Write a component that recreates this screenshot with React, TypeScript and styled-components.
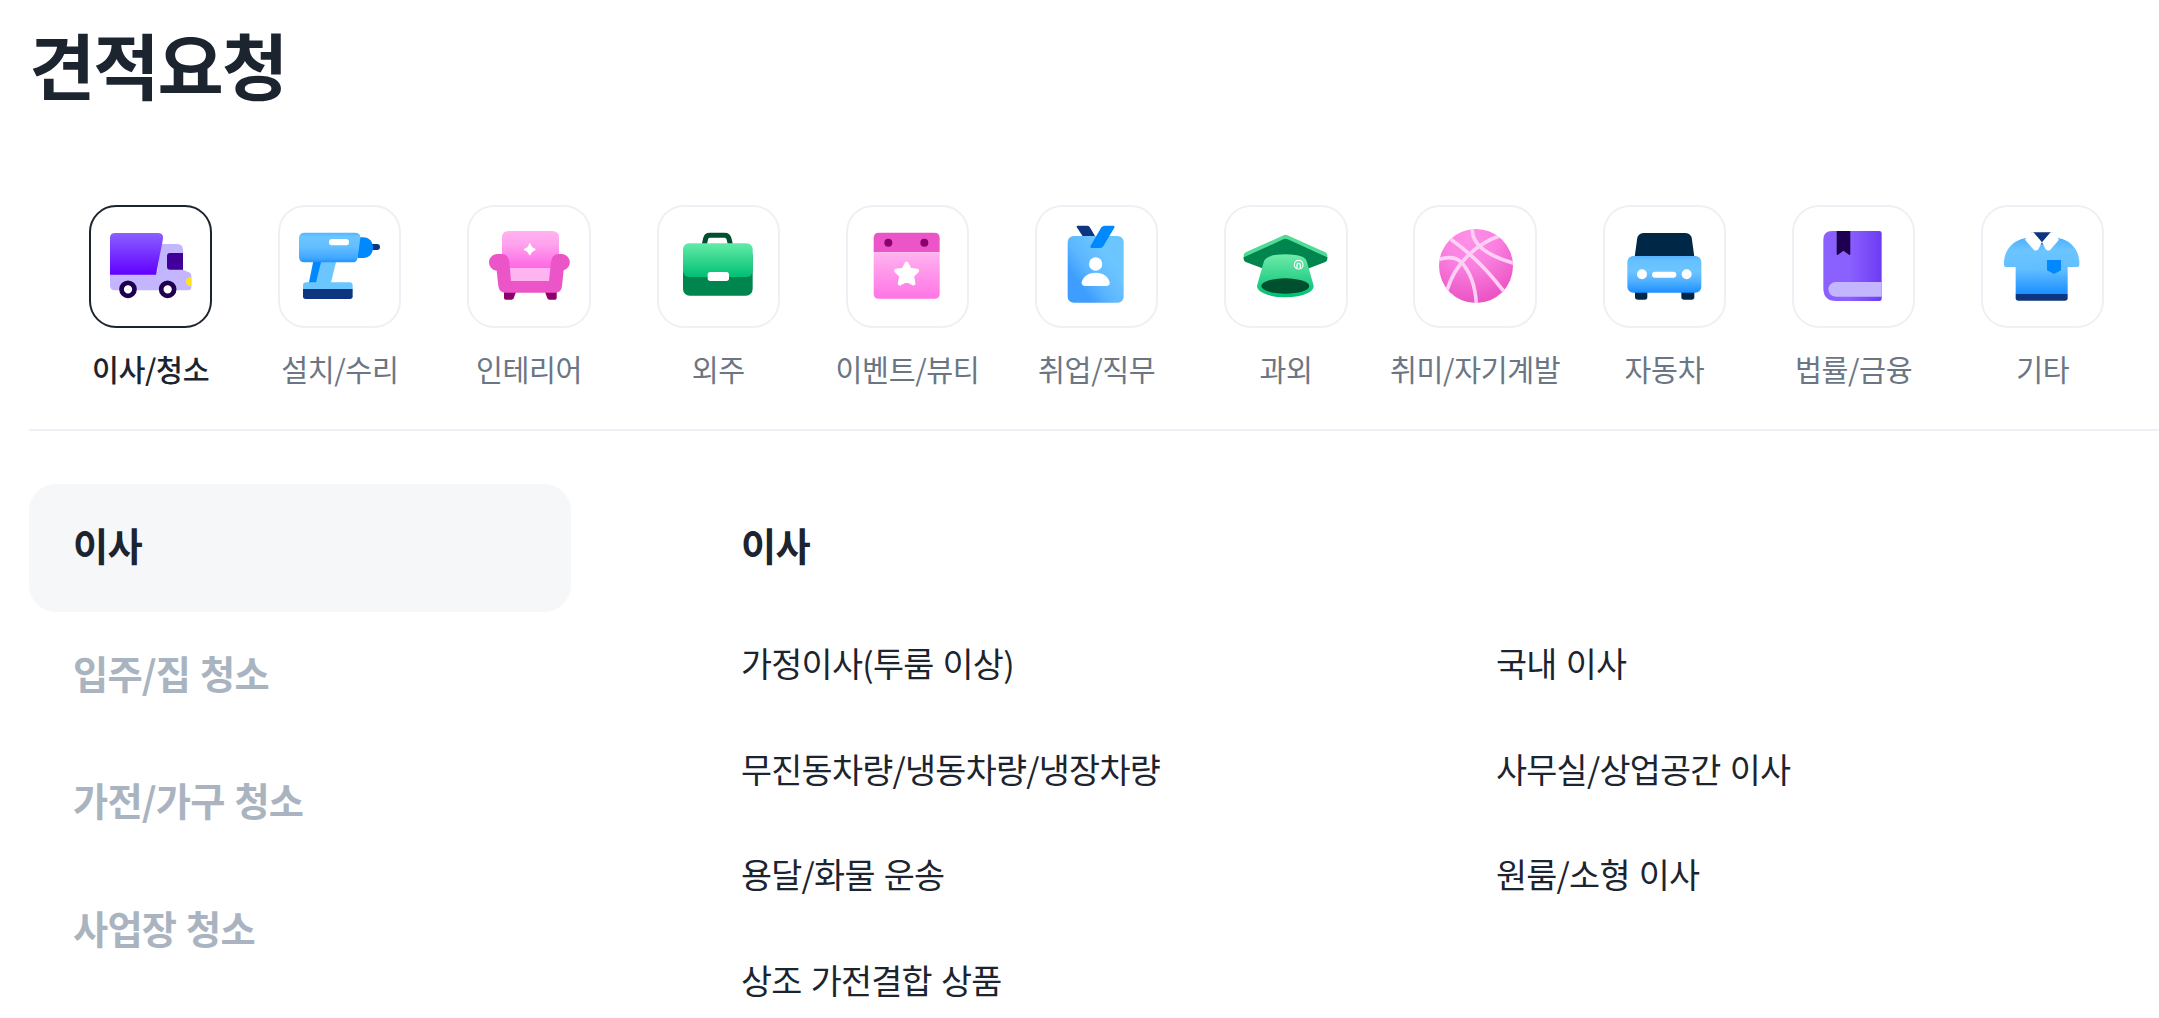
import { FC, ReactNode, useState } from "react";
import styled, { createGlobalStyle } from "styled-components";

const TruckIcon = () => (
  <>
    <defs>
      <linearGradient id="truck" x1="0" y1="0" x2="0" y2="1">
        <stop stopColor="#8A60FF" />
        <stop offset="1" stopColor="#6100FF" />
      </linearGradient>
    </defs>
    <path
      fill="#C4B5FF"
      d="M63 200H205L215 117H264Q282 117 282 135V194L300 202Q307 205 307 212V246Q307 256 297 256H78Q63 256 63 241Z"
    />
    <path
      fill="url(#truck)"
      d="M63 99Q63 84 78 84H207Q224 84 222 101L201 209H63Z"
    />
    <path fill="#400099" d="M282 144V194H243Q234 194 234 185V153Q234 144 243 144Z" />
    <path fill="#FFE21A" d="M307 217V243C297 244 291 238 291 230S297 216 307 217Z" />
    <circle cx="117" cy="253" r="19.5" fill="#fff" stroke="#1F0050" strokeWidth="14" />
    <circle cx="236" cy="253" r="19.5" fill="#fff" stroke="#1F0050" strokeWidth="14" />
  </>
);

const DrillIcon = () => (
  <>
    <defs>
      <linearGradient id="drill" x1="0" y1="0" x2="0" y2="1">
        <stop stopColor="#55B2FF" />
        <stop offset=".14" stopColor="#6BC5FF" />
        <stop offset=".5" stopColor="#62BDFF" />
        <stop offset=".85" stopColor="#42A8FF" />
        <stop offset="1" stopColor="#1F93FF" />
      </linearGradient>
    </defs>
    <path fill="#0E357F" d="M278 117H297Q306 117 306 126T297 135H278Z" />
    <path fill="#0088FF" d="M244 97H255C274 97 285 111 285 128S274 159 255 159H238Z" />
    <path fill="#0088FF" d="M106 168H132L115 236H92Z" />
    <path fill="#6BC5FF" d="M130 168H175L158 236H113Z" />
    <path
      fill="url(#drill)"
      d="M63 100Q63 83 80 83H231Q248 83 247 99L239 158Q237 172 223 172H80Q63 172 63 155Z"
    />
    <rect x="153" y="102" width="60" height="19" rx="9.5" fill="#fff" />
    <path fill="#6BC5FF" d="M75 252V242Q75 232 85 232H214Q224 232 224 242V252Z" />
    <path fill="#0E357F" d="M75 252H224V274Q224 282 216 282H83Q75 282 75 274Z" />
  </>
);

const SofaIcon = () => (
  <>
    <defs>
      <linearGradient id="sofa" x1="0" y1="0" x2="0" y2="1">
        <stop stopColor="#FFB3F0" />
        <stop offset=".35" stopColor="#FFA3EE" />
        <stop offset="1" stopColor="#FF66E5" />
      </linearGradient>
    </defs>
    <path fill="#8C006B" d="M108 258H145L137 280Q135 284 131 284H113Q108 284 108 279Z" />
    <path fill="#8C006B" d="M266 258H230L238 280Q240 284 244 284H261Q266 284 266 279Z" />
    <path fill="url(#sofa)" d="M102 98Q102 78 122 78H253Q273 78 273 98V190H102Z" />
    <path fill="#FFB3F0" d="M115 189H260V235H115Z" />
    <path
      fill="#EB55C8"
      d="M90 147H101Q121 147 124 170L129 228H243L249 170Q252 147 272 147H283A25 25 0 0 1 287 196L282 243Q280 263 262 263H112Q94 263 91 243L86 197A25 25 0 0 1 90 147Z"
    />
    <path
      fill="#fff"
      d="M185 115Q188 115 190 122Q192 127 197 129Q203 131 203 133Q203 136 197 138Q192 140 190 145Q188 151 185 151Q183 151 181 145Q179 140 174 138Q167 136 167 133Q167 131 174 129Q179 127 181 122Q183 115 185 115Z"
    />
  </>
);

const BriefcaseIcon = () => (
  <>
    <defs>
      <linearGradient id="briefcase" x1="0" y1="0" x2="0" y2="1">
        <stop stopColor="#63EBA8" />
        <stop offset="1" stopColor="#00BF73" />
      </linearGradient>
    </defs>
    <path
      d="M142 118L146 101Q148 91 159 91H203Q213 91 216 101L220 118"
      fill="none"
      stroke="#00502F"
      strokeWidth="15"
    />
    <rect x="78" y="130" width="209" height="142" rx="20" fill="#00854F" />
    <rect x="78" y="115" width="209" height="101" rx="18" fill="url(#briefcase)" />
    <rect x="152" y="201" width="64" height="27" rx="8" fill="#fff" />
  </>
);

const CalendarIcon = () => (
  <>
    <defs>
      <linearGradient id="calendar" x1="0" y1="0" x2="0" y2="1">
        <stop stopColor="#FFB3F0" />
        <stop offset="1" stopColor="#FF74E5" />
      </linearGradient>
    </defs>
    <path fill="#EB55C8" d="M83 142V99Q83 83 99 83H265Q281 83 281 99V142Z" />
    <path fill="url(#calendar)" d="M83 142H281V266Q281 281 265 281H99Q83 281 83 266Z" />
    <circle cx="127" cy="113" r="12" fill="#8C006B" />
    <circle cx="235" cy="113" r="12" fill="#8C006B" />
    <path
      d="M182 176L191.5 194.5L213.5 197.5L198 212.5L202.5 235.5L182 225L161.5 235.5L166 212.5L150.5 197.5L172.500 194.5Z"
      fill="#fff"
      stroke="#fff"
      strokeWidth="12"
      strokeLinejoin="round"
    />
  </>
);

const BadgeIcon = () => (
  <>
    <defs>
      <linearGradient id="badge" x1=".12" y1=".8" x2=".7" y2=".3">
        <stop offset=".15" stopColor="#3D9EFF" />
        <stop offset=".5" stopColor="#5CB6FF" />
        <stop offset="1" stopColor="#6BC5FF" />
      </linearGradient>
    </defs>
    <path fill="#0E357F" d="M128 62H155Q161 62 164 66L184 100H147L125 66Q124 62 128 62Z" />
    <rect x="98" y="93" width="168" height="200" rx="18" fill="url(#badge)" />
    <path
      fill="#0088FF"
      d="M210 62H235Q241 63 238 68L205 123Q202 129 195 129H170Q164 128 167 122L199 67Q203 62 210 62Z"
    />
    <circle cx="182" cy="177" r="20" fill="#fff" />
    <path
      fill="#fff"
      d="M182 203C205 203 220 215 224 232Q225 243 214 243H151Q139 243 140 232C144 215 159 203 182 203Z"
    />
  </>
);

const CapIcon = () => (
  <>
    <defs>
      <linearGradient id="cap" x1="0" y1="0" x2="0" y2="1">
        <stop stopColor="#6EEBAA" />
        <stop offset="1" stopColor="#00BF73" />
      </linearGradient>
    </defs>
    <path
      fill="#50DC96"
      d="M179 91Q184 88 190 91L304 142Q310 145 310 151V160H59V151Q59 145 65 142Z"
    />
    <path
      fill="#00854F"
      d="M178 103Q184 100 191 103L310 157V162Q310 168 304 171L255 190H115L65 171Q59 168 59 162V157Z"
    />
    <path
      fill="url(#cap)"
      d="M120 168Q128 148 184 148T248 168L269 242Q270 256 250 265Q225 277 184 277T119 265Q98 256 99 242Z"
    />
    <ellipse cx="184" cy="243" rx="72" ry="23" fill="#00502F" />
    <circle cx="224" cy="179" r="13" fill="none" stroke="#fff" strokeWidth="3.5" />
    <path d="M219 190V180A5 5 0 0 1 229 180V190" fill="none" stroke="#fff" strokeWidth="4" />
  </>
);

const BallIcon = () => (
  <>
    <defs>
      <radialGradient id="ball" cx=".4" cy=".12" r=".95">
        <stop stopColor="#FF90E8" />
        <stop offset=".4" stopColor="#FA80E0" />
        <stop offset="1" stopColor="#E84DC0" />
      </radialGradient>
      <clipPath id="ballClip">
        <circle cx="186" cy="183" r="111" />
      </clipPath>
    </defs>
    <circle cx="186" cy="183" r="111" fill="url(#ball)" />
    <g clipPath="url(#ballClip)" fill="none" stroke="#FFD0F6" strokeWidth="11">
      <path d="M174 68C174 112 202 146 300 175" />
      <path d="M258 92C190 115 124 172 99 256" />
      <path d="M110 103C160 137 222 197 270 260" />
      <path d="M72 164C108 152 130 160 142 172C170 202 184 245 187 296" />
    </g>
  </>
);

const CarIcon = () => (
  <>
    <defs>
      <linearGradient id="car" x1="0" y1="0" x2="0" y2="1">
        <stop stopColor="#55B2FF" />
        <stop offset=".12" stopColor="#66C0FF" />
        <stop offset=".4" stopColor="#6BC5FF" />
        <stop offset=".7" stopColor="#4FB0FF" />
        <stop offset="1" stopColor="#1A8FFF" />
      </linearGradient>
    </defs>
    <path fill="#002846" d="M95 156L102 104Q104 84 122 84H247Q265 84 267 104L274 156Z" />
    <path fill="#002846" d="M96 255H133V276Q133 284 125 284H105Q96 284 96 276Z" />
    <path fill="#002846" d="M235 255H274V276Q274 284 266 284H244Q235 284 235 276Z" />
    <rect x="73" y="153" width="222" height="110" rx="18" fill="url(#car)" />
    <circle cx="117" cy="208" r="15" fill="#fff" />
    <circle cx="251" cy="208" r="15" fill="#fff" />
    <rect x="147" y="200" width="73" height="18" rx="9" fill="#fff" />
  </>
);

const BookIcon = () => (
  <>
    <defs>
      <linearGradient id="book" x1="0" y1="0" x2="1" y2="0">
        <stop offset=".45" stopColor="#8A60FF" />
        <stop offset="1" stopColor="#6C3CF2" />
      </linearGradient>
    </defs>
    <path
      fill="url(#book)"
      d="M94 104Q94 78 120 78H262Q269 78 269 85V281Q269 288 262 288H132Q94 288 94 250Z"
    />
    <path fill="#1F0050" d="M134 78H175V147Q175 151 171 149L154.5 137L138 149Q134 151 134 147Z" />
    <path fill="#C4B5FF" d="M269 231V275H131A22 22 0 0 1 131 231Z" />
  </>
);

const ShirtIcon = () => (
  <>
    <defs>
      <linearGradient id="shirt" x1="0" y1="0" x2="0" y2="1">
        <stop stopColor="#4FB0FF" />
        <stop offset=".22" stopColor="#6BC5FF" />
        <stop offset=".55" stopColor="#62BEFF" />
        <stop offset="1" stopColor="#1A8FFF" />
      </linearGradient>
    </defs>
    <path
      fill="url(#shirt)"
      d="M132 100H234C268 106 292 132 295 168V180Q295 186 289 186H260V268H104V186H75Q69 186 69 180V168C72 132 98 106 132 100Z"
    />
    <path fill="#0E357F" d="M104 267H260V280Q260 287 253 287H111Q104 287 104 280Z" />
    <path fill="#0E357F" d="M150 82H216L192 118H174Z" />
    <path
      fill="#fff"
      d="M152 81Q156 80 160 85L183 112L172 133Q165 140 158 134L132 104Z"
    />
    <path
      fill="#fff"
      d="M214 81Q210 80 206 85L183 112L194 133Q201 140 208 134L234 104Z"
    />
    <path fill="#0088FF" d="M198 165H240V196L219 207L198 196Z" />
  </>
);

const categories: { name: string; icon: ReactNode }[] = [
  { name: "이사/청소", icon: <TruckIcon /> },
  { name: "설치/수리", icon: <DrillIcon /> },
  { name: "인테리어", icon: <SofaIcon /> },
  { name: "외주", icon: <BriefcaseIcon /> },
  { name: "이벤트/뷰티", icon: <CalendarIcon /> },
  { name: "취업/직무", icon: <BadgeIcon /> },
  { name: "과외", icon: <CapIcon /> },
  { name: "취미/자기계발", icon: <BallIcon /> },
  { name: "자동차", icon: <CarIcon /> },
  { name: "법률/금융", icon: <BookIcon /> },
  { name: "기타", icon: <ShirtIcon /> },
];

const groups = ["이사", "입주/집 청소", "가전/가구 청소", "사업장 청소"];

const services = [
  "가정이사(투룸 이상)",
  "국내 이사",
  "무진동차량/냉동차량/냉장차량",
  "사무실/상업공간 이사",
  "용달/화물 운송",
  "원룸/소형 이사",
  "상조 가전결합 상품",
];

const App: FC = () => {
  const [category, setCategory] = useState(0);
  const [group, setGroup] = useState(0);

  return (
    <Page>
      <GlobalStyle />
      <Title>견적요청</Title>
      <CategoryNav>
        {categories.map(({ name, icon }, i) => (
          <Category key={name} onClick={() => setCategory(i)}>
            <Tile $active={i === category}>
              <svg width="97" height="97" viewBox="39 39 291 291">
                {icon}
              </svg>
            </Tile>
            <CategoryName $active={i === category}>{name}</CategoryName>
          </Category>
        ))}
      </CategoryNav>
      <Content>
        <Sidebar>
          {groups.map((name, i) => (
            <SidebarItem
              key={name}
              $active={i === group}
              onClick={() => setGroup(i)}
            >
              {name}
            </SidebarItem>
          ))}
        </Sidebar>
        <Panel>
          <PanelTitle>{groups[group]}</PanelTitle>
          <ServiceList>
            {services.map((name) => (
              <Service key={name}>{name}</Service>
            ))}
          </ServiceList>
        </Panel>
      </Content>
    </Page>
  );
};

export default App;

const GlobalStyle = createGlobalStyle`
  * {
    box-sizing: border-box;
  }

  body {
    margin: 0;
    overflow: hidden;
    background: #fff;
    color: #1c242f;
    font-family: "Noto Sans CJK KR", "Noto Sans", sans-serif;
  }
`;

const Page = styled.main`
  width: 100%;
  height: 1018px;
  padding-left: 29px;
  overflow: hidden;
`;

const Title = styled.h1`
  margin: 0;
  padding-top: 14px;
  font-size: 72px;
  font-weight: 700;
  line-height: 98px;
  letter-spacing: -0.027em;
`;

const CategoryNav = styled.nav`
  display: flex;
  height: 319px;
  padding: 93px 0 0 27px;
  border-bottom: 2px solid #edf0f4;
`;

const Category = styled.button`
  display: flex;
  flex: 0 0 189.22px;
  flex-direction: column;
  align-items: center;
  padding: 0;
  border: 0;
  background: none;
  font: inherit;
  cursor: pointer;
`;

const Tile = styled.span<{ $active: boolean }>`
  display: flex;
  align-items: center;
  justify-content: center;
  width: 123.3px;
  height: 123px;
  border: 2px solid ${({ $active }) => ($active ? "#1c242f" : "#edf0f4")};
  border-radius: 27px;
`;

const CategoryName = styled.span<{ $active: boolean }>`
  margin-top: 19px;
  color: ${({ $active }) => ($active ? "#1c242f" : "#6b7684")};
  font-size: 29.25px;
  font-weight: ${({ $active }) => ($active ? 500 : 400)};
  line-height: 42px;
  letter-spacing: -0.37px;
  white-space: nowrap;
`;

const Content = styled.div`
  display: flex;
  padding-top: 53px;
`;

const Sidebar = styled.aside`
  flex: 0 0 542px;
`;

const SidebarItem = styled.div<{ $active: boolean }>`
  height: 127.5px;
  padding-left: 44px;
  border-radius: 27px;
  background: ${({ $active }) => ($active ? "#f5f7f9" : "transparent")};
  color: ${({ $active }) => ($active ? "#1c242f" : "#a9b4c0")};
  font-size: 38.25px;
  font-weight: 700;
  line-height: 121px;
  letter-spacing: -0.8px;
  word-spacing: 2px;
  cursor: pointer;
`;

const Panel = styled.section`
  flex: 1;
  padding-left: 170px;
`;

const PanelTitle = styled.h2`
  height: 126px;
  margin: 0;
  font-size: 38.25px;
  font-weight: 700;
  line-height: 121px;
  letter-spacing: -0.8px;
`;

const ServiceList = styled.ul`
  display: grid;
  grid-template-columns: 755px 1fr;
  margin: 0;
  padding: 0;
  list-style: none;
`;

const Service = styled.li`
  height: 105.6px;
  font-size: 33.75px;
  line-height: 106px;
  letter-spacing: -0.74px;
  word-spacing: 2.2px;
  white-space: nowrap;
`;
